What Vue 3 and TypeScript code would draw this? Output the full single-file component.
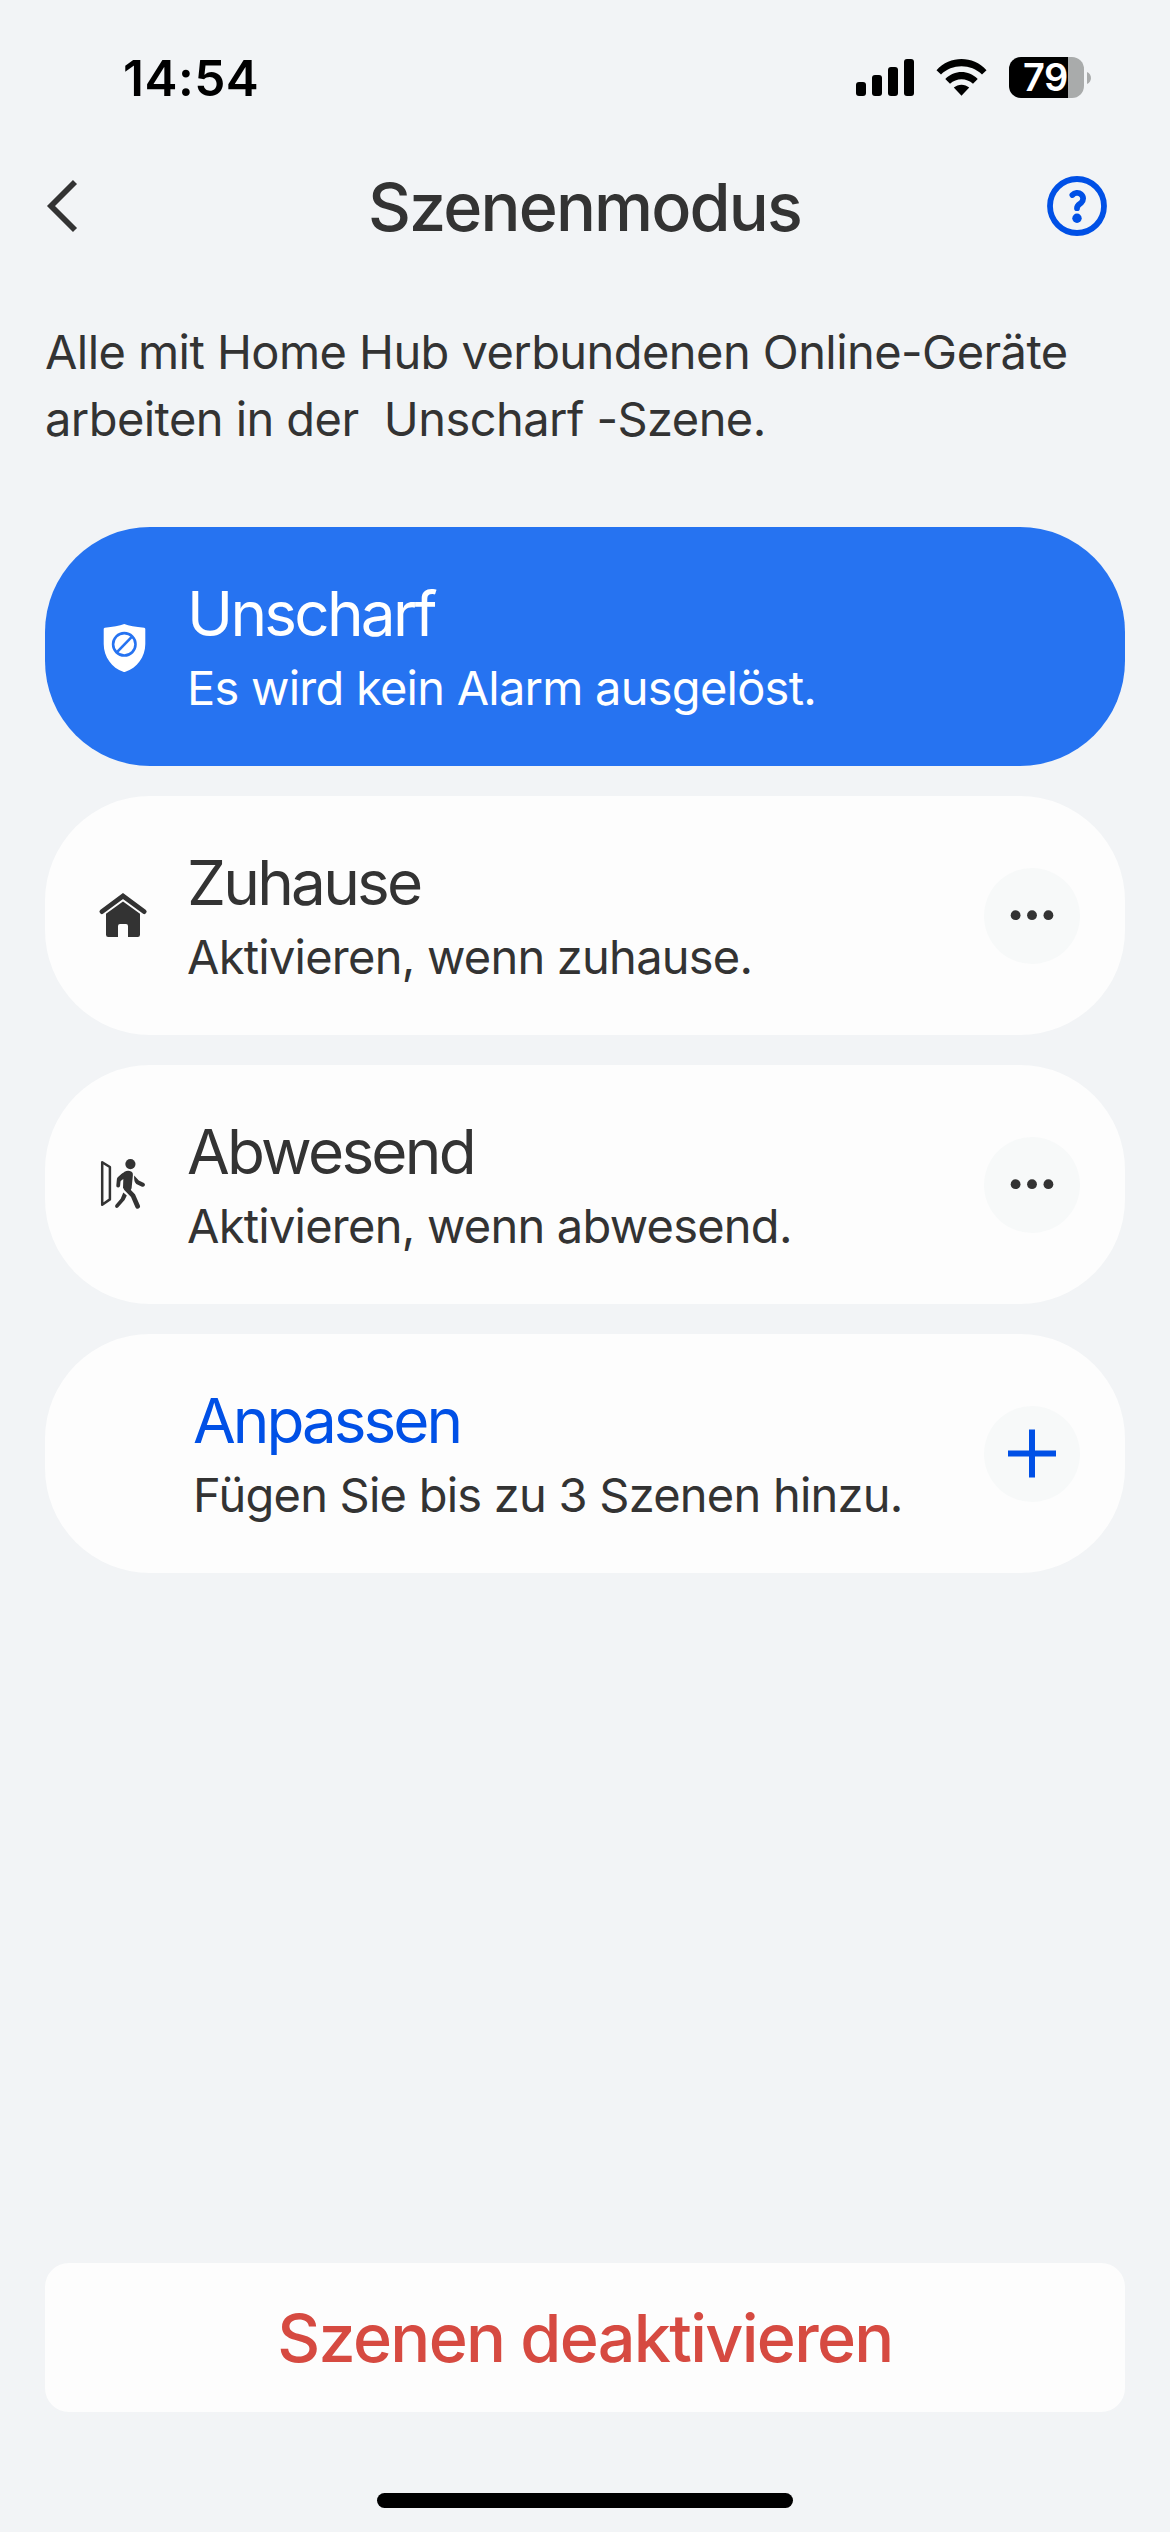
<script setup lang="ts">
type Icon = 'shield' | 'home' | 'away' | 'none'
type Action = 'none' | 'more' | 'add'

interface Scene {
  id: string
  title: string
  hint: string
  icon: Icon
  action: Action
  active?: boolean
}

const batteryLevel = 79

const scenes: Scene[] = [
  { id: 'disarmed', title: 'Unscharf', hint: 'Es wird kein Alarm ausgelöst.', icon: 'shield', action: 'none', active: true },
  { id: 'home', title: 'Zuhause', hint: 'Aktivieren, wenn zuhause.', icon: 'home', action: 'more' },
  { id: 'away', title: 'Abwesend', hint: 'Aktivieren, wenn abwesend.', icon: 'away', action: 'more' },
  { id: 'custom', title: 'Anpassen', hint: 'Fügen Sie bis zu 3 Szenen hinzu.', icon: 'none', action: 'add' },
]
</script>

<template>
  <div class="screen">
    <div class="status">
      <span class="time">14:54</span>
      <div class="indicators">
        <svg class="signal" width="58" height="37" viewBox="0 0 58 37">
          <rect x="0" y="23" width="10" height="14" rx="3" />
          <rect x="16" y="16" width="10" height="21" rx="3" />
          <rect x="32" y="8" width="10" height="29" rx="3" />
          <rect x="48" y="0" width="10" height="37" rx="3" />
        </svg>
        <svg class="wifi" width="51" height="37" viewBox="0 0 51 37">
          <path d="M0.5 11.2C14 -3.7 37 -3.7 50.5 11.2L46 15.6C35 4.6 16 4.6 5 15.6Z" />
          <path d="M9.3 20C18.4 10.7 32.6 10.7 41.7 20L37 24.8C30.5 18.6 20.5 18.6 14 24.8Z" />
          <path d="M17.8 28.6C22 24.7 29 24.7 33.2 28.6L25.5 36.8Z" />
        </svg>
        <div class="battery">
          <div class="cell"><span class="level">{{ batteryLevel }}</span></div>
          <svg class="tip" width="4" height="12" viewBox="0 0 4 12"><path d="M0 0C5.3 2 5.3 10 0 12Z" /></svg>
        </div>
      </div>
    </div>

    <header class="nav">
      <svg class="back" width="34" height="54" viewBox="0 0 34 54">
        <path d="M30 3L6 27L30 51" />
      </svg>
      <h1 class="heading">Szenenmodus</h1>
      <svg class="help" width="60" height="60" viewBox="0 0 60 60">
        <circle class="line ring" cx="30" cy="30" r="27" />
        <path class="line" d="M25.4 19C27.5 16.7 31.5 16.1 34 18.2C36.8 20.6 36.8 24.6 34 27C31.8 28.6 30 29.4 30 32.2" />
        <circle class="dot" cx="30" cy="42.3" r="4.7" />
      </svg>
    </header>

    <p class="intro">Alle mit Home Hub verbundenen Online-Geräte<br />arbeiten in der&nbsp; Unscharf -Szene.</p>

    <main class="scenes">
      <section v-for="scene in scenes" :key="scene.id" class="card" :class="[scene.id, { active: scene.active }]">
        <svg v-if="scene.icon === 'shield'" class="icon" width="54" height="55" viewBox="0 0 54 55">
          <path class="white" d="M27.3 5Q34 7.6 47.2 8.8Q48.3 9 48.3 10V25C48.3 38 40 49 28.4 52.8Q27.3 53.2 26.2 52.8C15 49 6.7 38 6.7 25V10Q6.7 9 7.8 8.8Q20 7.6 27.3 5Z" />
          <circle class="cut" cx="27.3" cy="25.3" r="11.2" />
          <path class="cut" d="M20 33.1L35 17.7" />
        </svg>
        <svg v-else-if="scene.icon === 'home'" class="icon" width="54" height="55" viewBox="0 0 54 55">
          <path class="roof" d="M4.9 23.6L26 8L47.2 23.6" />
          <path d="M26 13.6L43 25.8V46.8Q43 49 40.8 49H31V38Q31 36 29 36H23Q21 36 21 38V49H11.2Q9 49 9 46.8V25.8Z" />
        </svg>
        <svg v-else-if="scene.icon === 'away'" class="icon" width="54" height="55" viewBox="0 0 54 55">
          <path class="door" d="M5.2 5.2L12.9 10V42.4L5.2 47.7Z" />
          <circle cx="33.4" cy="7.1" r="5.1" />
          <path d="M20.6 20.5L27.5 14.8Q31 13 34.6 14.7Q36.1 15.6 35.9 18L34.6 31.3L33.2 34L26 31L26.3 22L23 24.5Z" />
          <path class="limb" d="M21.2 28.6L21.8 22.2L26 18.2" />
          <path d="M37.2 18.6L41.8 23.4L47 26Q48.6 27.2 47.7 28.8Q46.7 30.2 45 29.7L39.3 27Q36.6 24.6 37.2 18.6Z" />
          <path class="leg" d="M29 31.4L36 38.6L40.6 49.3" />
          <path d="M26.3 35.6L29.8 38.4L27.6 43L21 50.5Q19.5 51.5 18.4 50.2Q17.6 49 18.6 47.7L23.7 41.8Z" />
        </svg>

        <div class="copy">
          <h2 class="title">{{ scene.title }}</h2>
          <p class="hint">{{ scene.hint }}</p>
        </div>

        <div v-if="scene.action !== 'none'" class="action">
          <svg v-if="scene.action === 'more'" width="96" height="96" viewBox="0 0 96 96">
            <circle cx="31.6" cy="47.2" r="4.9" />
            <circle cx="48" cy="47.2" r="4.9" />
            <circle cx="64.4" cy="47.2" r="4.9" />
          </svg>
          <svg v-else width="96" height="96" viewBox="0 0 96 96">
            <path class="plus" d="M24 47.5H72M48 23.5V71.5" />
          </svg>
        </div>
      </section>
    </main>

    <div class="disable">Szenen deaktivieren</div>
    <div class="home-bar"></div>
  </div>
</template>

<style>
body {
  margin: 0;
  background: #f2f4f6;
}
</style>

<style scoped>
.screen {
  box-sizing: border-box;
  display: flex;
  flex-direction: column;
  width: 1170px;
  height: 2532px;
  overflow: hidden;
  background: #f2f4f6;
  color: #333;
  font-family: Inter, "Liberation Sans", sans-serif;
  white-space: nowrap;
}

svg {
  display: block;
  flex: none;
}

h1,
h2,
p {
  margin: 0;
  font-weight: 400;
}

.status {
  display: flex;
  justify-content: space-between;
  height: 132px;
  padding: 0 79px 0 123px;
  box-sizing: border-box;
  color: #000;
}

.time {
  margin-top: 48px;
  font-size: 49.5px;
  line-height: 60px;
  font-weight: 600;
  letter-spacing: 0.5px;
}

.indicators {
  display: flex;
  align-items: center;
  height: 41px;
  margin-top: 57px;
}

.wifi {
  margin-left: 22px;
}

.battery {
  display: flex;
  align-items: center;
  gap: 3px;
  margin-left: 22px;
}

.cell {
  width: 75px;
  height: 41px;
  border-radius: 12px;
  background: linear-gradient(90deg, #000 59px, #a9abab 59px);
}

.level {
  display: block;
  padding-left: 14px;
  color: #fff;
  font-size: 38px;
  line-height: 41px;
  font-weight: 600;
  letter-spacing: -0.5px;
}

.tip {
  fill: #a9abab;
}

.nav {
  display: flex;
  align-items: center;
  justify-content: space-between;
  height: 150px;
  padding: 0 63px 2px 45px;
  box-sizing: border-box;
}

.back {
  margin-right: 43px;
}

.back path {
  fill: none;
  stroke: #333;
  stroke-width: 5.7;
}

.heading {
  padding-top: 1px;
  font-size: 66.5px;
  line-height: 78px;
  font-weight: 500;
  letter-spacing: -1.85px;
}

.help .line {
  fill: none;
  stroke: #0050e6;
  stroke-width: 5.8;
  stroke-linecap: round;
}

.help .dot {
  fill: #0050e6;
}

.intro {
  height: 134px;
  margin: 36px 45px 0;
  font-size: 47px;
  line-height: 67px;
  letter-spacing: -0.56px;
}

.scenes {
  display: flex;
  flex-direction: column;
  gap: 30px;
  margin: 75px 45px 0;
}

.card {
  display: flex;
  align-items: center;
  height: 239px;
  padding: 0 45px 0 52px;
  box-sizing: border-box;
  border-radius: 105px;
  background: #fdfdfd;
}

.card.active {
  background: #2673f1;
  color: #fff;
}

.icon {
  margin-right: 36px;
  fill: #333;
}

.icon .white {
  fill: #fff;
}

.icon .cut {
  fill: none;
  stroke: #2673f1;
  stroke-width: 2.6;
}

.icon .roof {
  fill: none;
  stroke: #333;
  stroke-width: 4.8;
  stroke-linecap: round;
}

.icon .door {
  fill: none;
  stroke: #333;
  stroke-width: 2.5;
  stroke-linejoin: round;
}

.icon .limb,
.icon .leg {
  fill: none;
  stroke: #333;
  stroke-width: 3.8;
  stroke-linecap: round;
  stroke-linejoin: round;
}

.icon .leg {
  stroke-width: 4.8;
}

.copy {
  flex: 1;
  padding-bottom: 2px;
}

.custom .copy {
  margin-left: 96px;
}

.title {
  font-size: 62px;
  line-height: 75px;
  letter-spacing: -2.75px;
}

.custom .title {
  color: #0050e6;
  letter-spacing: -3px;
}

.hint {
  margin-top: 8px;
  font-size: 47px;
  line-height: 57px;
  letter-spacing: -0.76px;
}

.action {
  width: 96px;
  height: 96px;
  border-radius: 50%;
  background: #f7f9f9;
  fill: #333;
}

.plus {
  fill: none;
  stroke: #0050e6;
  stroke-width: 6;
}

.disable {
  height: 149px;
  margin: 690px 45px 0;
  border-radius: 24px;
  background: #fdfdfd;
  color: #d64a41;
  font-size: 66.5px;
  line-height: 150px;
  font-weight: 500;
  letter-spacing: -1.7px;
  text-align: center;
}

.home-bar {
  width: 416px;
  height: 15px;
  margin: 81px auto 0;
  border-radius: 8px;
  background: #000;
}
</style>
